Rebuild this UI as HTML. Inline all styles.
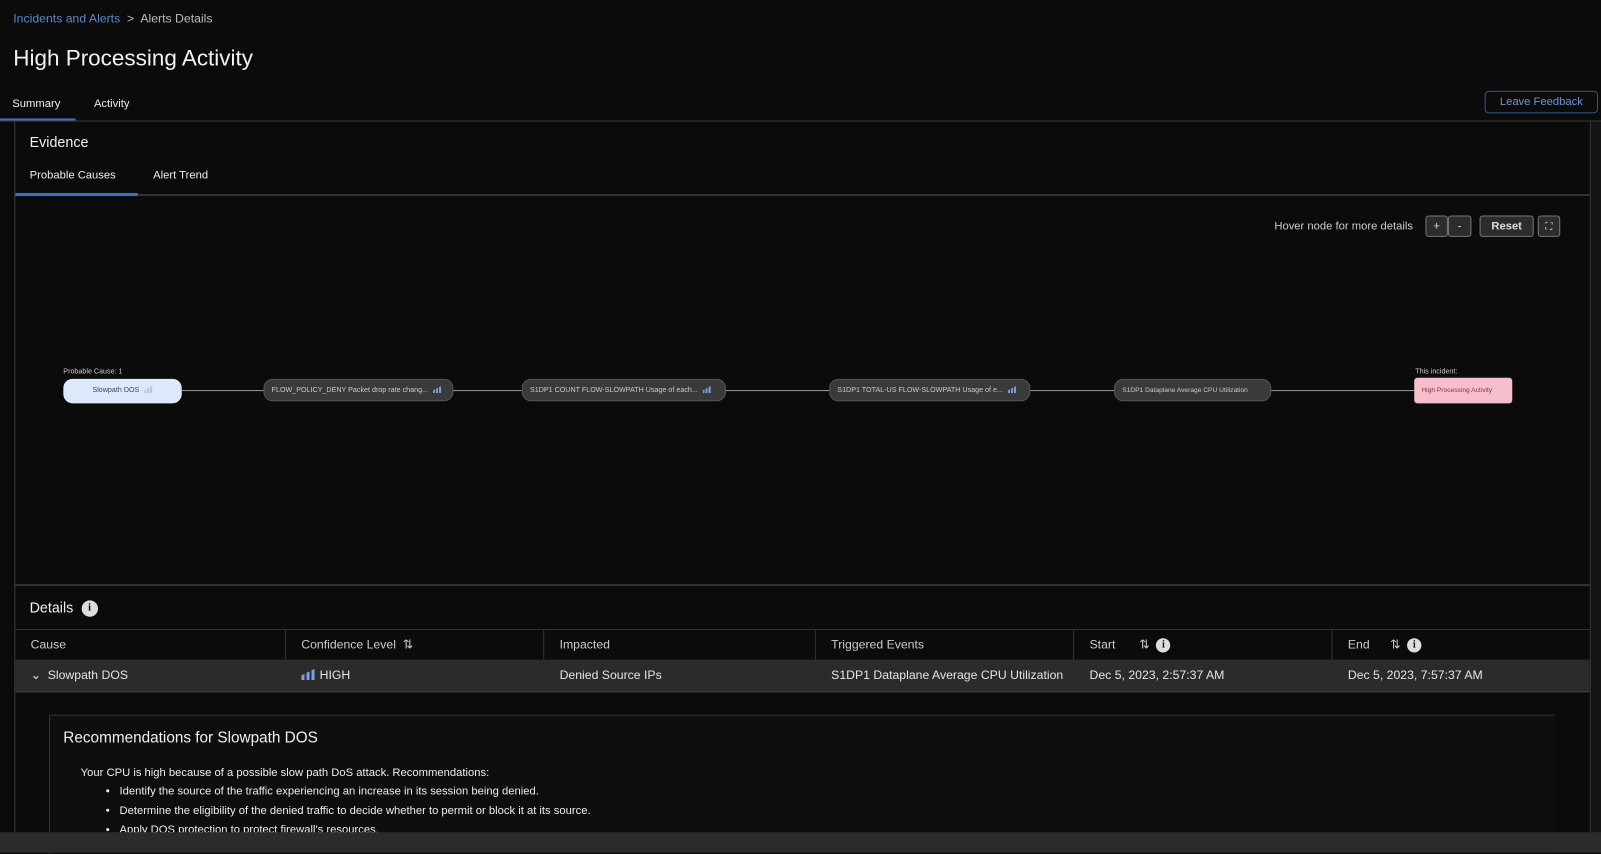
<!DOCTYPE html><html><head><style>
body{margin:0;width:1601px;height:835px;background:#0b0b0c;font-family:"Liberation Sans",sans-serif;color:#ddd;position:relative;overflow:hidden}
#w{position:absolute;left:0;top:0;width:1568px;height:818px;transform:scale(1.0211);transform-origin:0 0}
.a{position:absolute}
.node{position:absolute;height:22px;border-radius:9px;background:#3a3a3c;color:#ccc;font-size:7px;line-height:22px;white-space:nowrap;padding-left:7px;box-sizing:border-box;border:1px solid #555;overflow:hidden}
.line{position:absolute;height:1px;background:#999;top:382px}
.bars{display:inline-block;width:8px;height:7px;margin-left:5px;vertical-align:-1px;background:linear-gradient(90deg,#7a9fe0 0 2px,transparent 2px 3px,#7a9fe0 3px 5px,transparent 5px 6px,#7a9fe0 6px 8px);clip-path:polygon(0 60%,100% 0,100% 100%,0 100%)}
.th{position:absolute;top:617px;height:29px;line-height:29px;font-size:12px;color:#ccc;border-right:1px solid #333;box-sizing:border-box;padding-left:15px}
.td{position:absolute;top:646px;height:31px;line-height:31px;font-size:12px;color:#e5e5e5;padding-left:15px}
.info{display:inline-block;width:14px;height:14px;border-radius:50%;background:#ddd;color:#000;font-size:10px;font-weight:bold;text-align:center;line-height:14px;vertical-align:middle;font-family:"Liberation Serif",serif}
.btn{position:absolute;top:211px;height:21px;border:1px solid #777;border-radius:3px;background:#2c2c2e;color:#ddd;font-size:11px;text-align:center;line-height:21px;box-sizing:border-box}
li{margin:0 0 5px}
</style></head><body><div id="w">
<div class="a" style="left:13px;top:11px;font-size:12px"><span style="color:#5a86c9">Incidents and Alerts</span> <span style="color:#bbb">&nbsp;&gt;&nbsp; Alerts Details</span></div>
<div class="a" style="left:13px;top:44px;font-size:22px;color:#f2f2f2">High Processing Activity</div>
<div class="a" style="left:12px;top:96px;font-size:11px;color:#eee">Summary</div>
<div class="a" style="left:92px;top:96px;font-size:11px;color:#eee">Activity</div>
<div class="a" style="left:0;top:116px;width:74px;height:2px;background:#3f6fc8"></div>
<div class="a" style="left:0;top:118px;width:1568px;height:1px;background:#3a3a3a"></div>
<div class="a" style="left:1454px;top:89px;width:111px;height:22px;border:1px solid #34558a;border-radius:4px;box-sizing:border-box;color:#6e95d6;font-size:11px;text-align:center;line-height:20px">Leave Feedback</div>
<div class="a" style="left:14px;top:119px;width:1px;height:716px;background:#3a3a3a"></div>
<div class="a" style="left:1557px;top:119px;width:1px;height:716px;background:#3a3a3a"></div>
<div class="a" style="left:1558px;top:119px;width:10px;height:716px;background:#141414"></div>
<div class="a" style="left:29px;top:131px;font-size:14px;color:#f0f0f0">Evidence</div>
<div class="a" style="left:29px;top:166px;font-size:11px;color:#eee">Probable Causes</div>
<div class="a" style="left:150px;top:166px;font-size:11px;color:#eee">Alert Trend</div>
<div class="a" style="left:15px;top:190px;width:1542px;height:2px;background:#333"></div>
<div class="a" style="left:15px;top:189px;width:120px;height:3px;background:#3f6fc8"></div>
<div class="a" style="left:1248px;top:216px;font-size:11px;color:#ccc">Hover node for more details</div>
<div class="btn" style="left:1396px;width:22px">+</div><div class="btn" style="left:1418px;width:23px">-</div>
<div class="btn" style="left:1449px;width:53px;font-weight:bold">Reset</div>
<div class="btn" style="left:1506px;width:22px;font-size:10px">⛶</div>
<div class="a" style="left:62px;top:361px;font-size:7px;color:#ccc">Probable Cause: 1</div>
<div class="node" style="left:62px;top:371px;width:116px;height:24px;background:#dde8fb;color:#445;border:none;text-align:center;padding:0;line-height:24px">Slowpath DOS<span class="bars" style="opacity:.5"></span></div>
<div class="line" style="left:178px;width:80px"></div>
<div class="node" style="left:258px;top:371px;width:186px">FLOW_POLICY_DENY Packet drop rate chang...<span class="bars"></span></div>
<div class="line" style="left:444px;width:67px"></div>
<div class="node" style="left:511px;top:371px;width:200px">S1DP1 COUNT FLOW-SLOWPATH Usage of each...<span class="bars"></span></div>
<div class="line" style="left:711px;width:101px"></div>
<div class="node" style="left:812px;top:371px;width:197px">S1DP1 TOTAL-US FLOW-SLOWPATH Usage of e...<span class="bars"></span></div>
<div class="line" style="left:1009px;width:82px"></div>
<div class="node" style="left:1091px;top:371px;width:154px;font-size:6.5px">S1DP1 Dataplane Average CPU Utilization</div>
<div class="line" style="left:1245px;width:140px"></div>
<div class="a" style="left:1386px;top:361px;font-size:7px;color:#ccc">This incident:</div>
<div class="node" style="left:1385px;top:370px;width:96px;height:25px;line-height:25px;background:#f6bfcb;color:#834;border:none;border-radius:3px;font-size:6.5px">High Processing Activity</div>
<div class="a" style="left:15px;top:572px;width:1542px;height:2px;background:#333"></div>
<div class="a" style="left:29px;top:587px;font-size:14px;color:#f0f0f0">Details <span class="info" style="width:16px;height:16px;line-height:16px;margin-left:4px">i</span></div>
<div class="a" style="left:15px;top:616px;width:1542px;height:1px;background:#333"></div>
<div class="th" style="left:15px;width:265px">Cause</div>
<div class="th" style="left:280px;width:253px">Confidence Level &nbsp;⇅</div>
<div class="th" style="left:533px;width:266px">Impacted</div>
<div class="th" style="left:799px;width:253px">Triggered Events</div>
<div class="th" style="left:1052px;width:253px">Start &nbsp;&nbsp;&nbsp;&nbsp;&nbsp; ⇅ &nbsp;<span class="info">i</span></div>
<div class="th" style="left:1305px;width:252px;border:none">End &nbsp;&nbsp;&nbsp;&nbsp; ⇅ &nbsp;<span class="info">i</span></div>
<div class="a" style="left:15px;top:646px;width:1542px;height:31px;background:#2b2b2c;border-bottom:1px solid #444"></div>
<div class="td" style="left:15px">⌄ &nbsp;Slowpath DOS</div>
<div class="td" style="left:280px"><span class="bars" style="width:13px;height:11px;margin:0 5px 0 0;background:linear-gradient(90deg,#7a9fe0 0 3px,transparent 3px 5px,#7a9fe0 5px 8px,transparent 8px 10px,#7a9fe0 10px 13px)"></span>HIGH</div>
<div class="td" style="left:533px">Denied Source IPs</div>
<div class="td" style="left:799px">S1DP1 Dataplane Average CPU Utilization</div>
<div class="td" style="left:1052px">Dec 5, 2023, 2:57:37 AM</div>
<div class="td" style="left:1305px">Dec 5, 2023, 7:57:37 AM</div>
<div class="a" style="left:48px;top:700px;width:1474px;height:135px;border-top:1px solid #333;border-left:1px solid #333;background:#0e0e0f"></div>
<div class="a" style="left:62px;top:714px;font-size:15px;color:#f0f0f0">Recommendations for Slowpath DOS</div>
<div class="a" style="left:79px;top:751px;font-size:11px;color:#eee">Your CPU is high because of a possible slow path DoS attack. Recommendations:
<ul style="margin:6px 0 0;padding-left:38px"><li style="margin-bottom:7px">Identify the source of the traffic experiencing an increase in its session being denied.</li><li style="margin-bottom:7px">Determine the eligibility of the denied traffic to decide whether to permit or block it at its source.</li><li>Apply DOS protection to protect firewall's resources.</li></ul></div>
<div class="a" style="left:0;top:815px;width:1568px;height:20px;background:#2a2b2d"></div>
</div></body></html>
